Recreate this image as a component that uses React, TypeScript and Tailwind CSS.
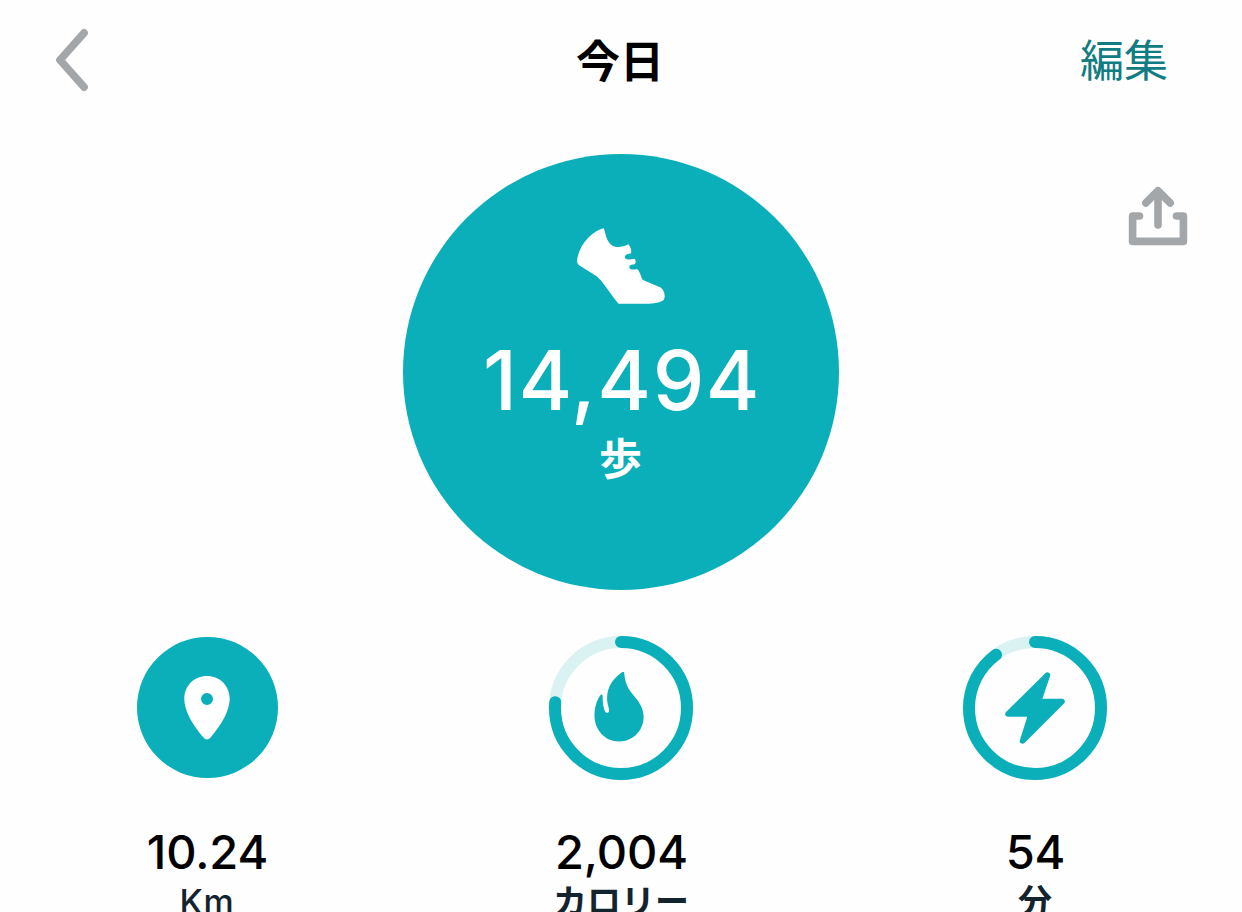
import type { ReactNode } from 'react';
import clsx from 'clsx';

const RING_RADIUS = 66;
const RING_LENGTH = 2 * Math.PI * RING_RADIUS;

function BackIcon() {
  return (
    <svg className="w-9 h-16" viewBox="0 0 36 64" fill="none">
      <path d="M30 5 L6 32 L30 59" stroke="#a4a7aa" strokeWidth="7.8" strokeLinecap="round" strokeLinejoin="round" />
    </svg>
  );
}

function ShareIcon() {
  return (
    <svg className="w-[60px] h-[60px]" viewBox="0 0 60 60" fill="none" stroke="#a4a7aa" strokeWidth="7.6" strokeLinecap="round" strokeLinejoin="round">
      <path d="M30 39 V5 M17.8 17 L30 4.8 L42.2 17" />
      <path d="M11.5 30 H4.6 V55.4 H55.4 V30 H48.5" />
    </svg>
  );
}

function ShoeIcon() {
  return (
    <svg className="w-[90px] h-[78px]" viewBox="0 0 90 78" fill="white">
      <path d="M27.7 1.3 C17 4 4 16 1.2 32 C.8 35 1.2 37 3.5 38.5 L21 49.5 C27.5 55 35 68 42.5 76.7 H70 C78 76.7 84 75.5 87 73.5 C90 71.5 89 62 83.5 60 L67.5 53.2 C65.5 52.3 65.2 48 62.5 43.5 C61.5 41.5 58 42.8 56 42.6 C52.8 42.4 52.3 38.2 55.5 37.8 L58.5 37.3 C60 36.5 60 33 58.5 31.8 L53 32.5 C48.2 33 47.3 28.4 51.5 27.3 L55 26.3 C55.8 23 54.5 19.5 52.3 17.3 C44 21.5 36 21.5 31.5 13 C29.5 9 29.3 5 27.7 1.3 Z" />
    </svg>
  );
}

function PinIcon() {
  return (
    <svg className="w-[46px] h-16" viewBox="0 0 46 64">
      <path fill="white" fillRule="evenodd" d="M23 0 C10 0 .3 10 .3 22.5 C.3 37 12 53 19.5 61.5 C21.7 64 24.3 64 26.5 61.5 C34 53 45.7 37 45.7 22.5 C45.7 10 36 0 23 0 Z M23 17 A6 6 0 1 1 23 29 A6 6 0 1 1 23 17 Z" />
    </svg>
  );
}

function FlameIcon() {
  return (
    <svg className="w-[50px] h-[70px]" viewBox="0 0 50 70" fill="#0aafba">
      <path d="M28 .2 C19 6.5 11.5 16 13.4 30.5 C13.8 33.5 15.4 36.5 15 39.2 C14.6 41.3 12 41.3 11.1 39.5 C8.6 34 8.8 28 8.6 23.6 C8.3 22.2 7 22.4 6.2 23.4 C2.5 28.5 .5 36 .5 43.5 C.5 58 11 69.5 25 69.5 C39 69.5 49.6 58.5 49.6 45 C49.6 36.5 45.5 30.5 40.5 24.5 C35.5 18.5 31.2 13.5 30.2 1 C30.1 -.4 29 -.5 28 .2 Z" />
    </svg>
  );
}

function BoltIcon() {
  return (
    <svg className="w-[60px] h-[72px]" viewBox="0 0 60 72">
      <path d="M42.5 3 L3 42 H26 L17.5 69 L57 29.5 H33.5 Z" fill="#0aafba" stroke="#0aafba" strokeWidth="5.5" strokeLinejoin="round" />
    </svg>
  );
}

function ProgressRing({ value, children }: { value: number; children: ReactNode }) {
  return (
    <div className="grid place-items-center w-36 h-36">
      <svg className="col-start-1 row-start-1 w-36 h-36 -rotate-90" viewBox="0 0 144 144" fill="none" strokeWidth="12">
        <circle cx="72" cy="72" r={RING_RADIUS} stroke="#daf2f2" />
        <circle
          cx="72"
          cy="72"
          r={RING_RADIUS}
          stroke="#0aafba"
          strokeLinecap="round"
          strokeDasharray={`${RING_LENGTH * value} ${RING_LENGTH}`}
        />
      </svg>
      <div className="col-start-1 row-start-1">{children}</div>
    </div>
  );
}

type StatProps = {
  value: string;
  unit: string;
  unitClass?: string;
  children: ReactNode;
};

function Stat({ value, unit, unitClass = 'font-bold', children }: StatProps) {
  return (
    <div className="flex flex-col items-center">
      <div className="h-36 flex items-center justify-center">{children}</div>
      <div className="mt-[43px] h-[58px] leading-[58px] pl-px text-[47px] font-medium text-black tracking-[-0.1px]">{value}</div>
      <div className={clsx('h-[41px] leading-[41px] text-[34px] text-[#13242f] whitespace-nowrap', unitClass)}>{unit}</div>
    </div>
  );
}

export default function App() {
  return (
    <div className="w-[1242px] h-[912px] overflow-hidden bg-[#fefefe] font-['Inter','Noto_Sans_CJK_JP',sans-serif]">
      {/* Navigation bar */}
      <header className="grid grid-cols-3 items-center h-[120px] pl-[54px] pr-[74px]">
        <button className="justify-self-start" aria-label="戻る">
          <BackIcon />
        </button>
        <h1 className="justify-self-center ml-[18px] pt-[3px] text-[44px] leading-[60px] font-bold text-black">今日</h1>
        <button className="justify-self-end pt-px text-[44px] leading-[60px] font-normal text-[#117c82]">編集</button>
      </header>

      {/* Step count */}
      <section className="grid grid-cols-[1fr_436px_1fr] pt-[34px]">
        <div className="col-start-2 flex flex-col items-center h-[436px] rounded-full bg-[#0aafba] pt-[73px] text-white">
          <ShoeIcon />
          <div className="mt-[26px] h-[100px] leading-[100px] pl-0.5 text-[82px] font-medium tracking-[1.5px]">14,494</div>
          <div className="mt-[3px] mr-px h-[50px] leading-[50px] text-[43px] font-bold">歩</div>
        </div>
        <button className="justify-self-end self-start mt-8 mr-[54px]" aria-label="共有">
          <ShareIcon />
        </button>
      </section>

      {/* Daily stats */}
      <section className="grid grid-cols-3 pt-[46px]">
        <Stat value="10.24" unit="Km" unitClass="font-medium tracking-[0.8px]">
          <div className="flex items-center justify-center w-[141px] h-[141px] mb-px rounded-full bg-[#0aafba]">
            <PinIcon />
          </div>
        </Stat>
        <Stat value="2,004" unit="カロリー">
          <ProgressRing value={0.763}>
            <div className="-mt-0.5 -ml-1">
              <FlameIcon />
            </div>
          </ProgressRing>
        </Stat>
        <Stat value="54" unit="分">
          <ProgressRing value={0.898}>
            <BoltIcon />
          </ProgressRing>
        </Stat>
      </section>
    </div>
  );
}
